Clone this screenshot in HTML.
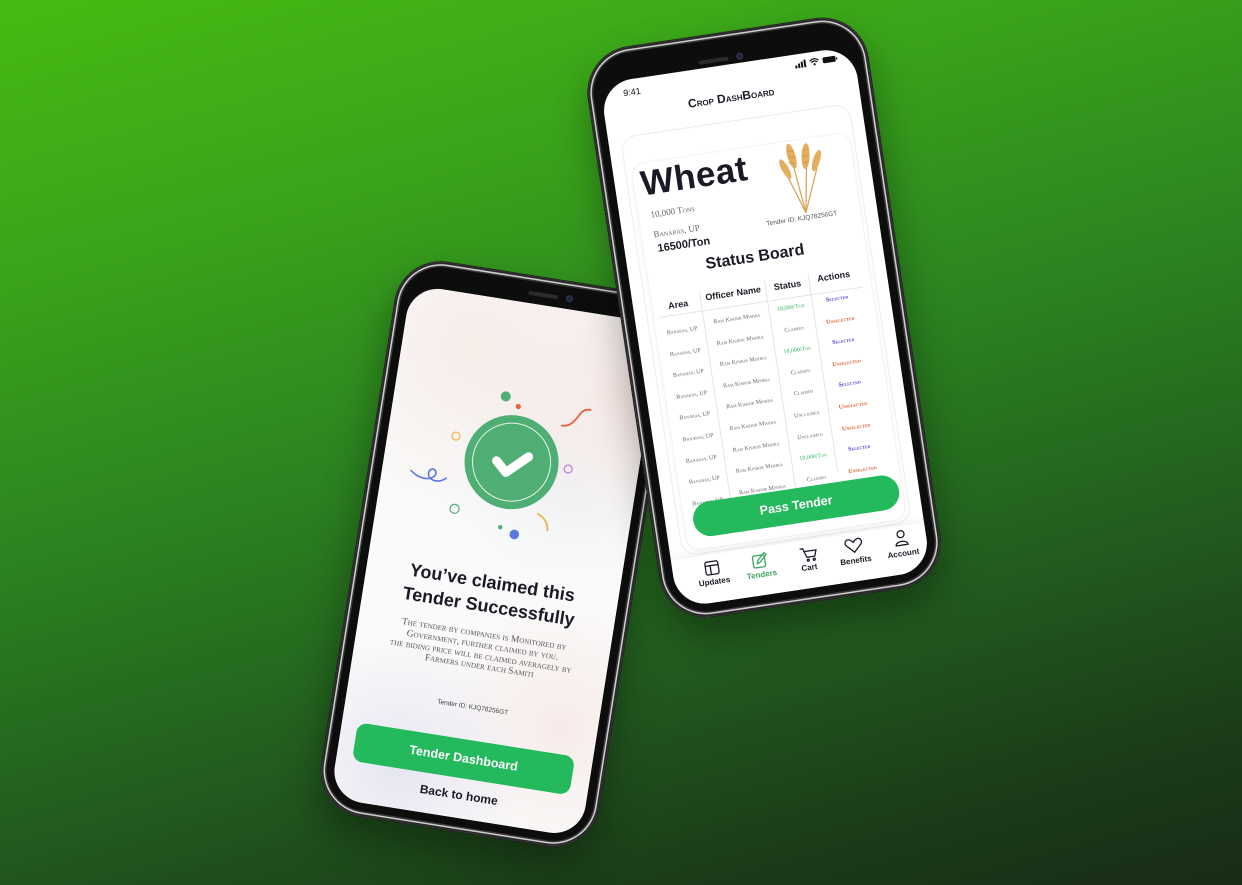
<!DOCTYPE html>
<html><head><meta charset="utf-8"><style>
*{margin:0;padding:0;box-sizing:border-box}
html,body{width:1242px;height:885px;overflow:hidden}
body{background:linear-gradient(165deg,#46ba12 0%,#3aa51a 22%,#2c8520 45%,#215a1e 70%,#1b3a19 88%,#182c16 100%);font-family:"Liberation Sans","DejaVu Sans",sans-serif;position:relative}
.phone{position:absolute;border-radius:46px;background:#0d0d0d;box-shadow:0 0 0 1px #222,inset 0 0 0 2px #2a2a2a,inset 0 0 0 3.5px #d0d0d0,inset 0 0 0 5px #3a3a3a,0 20px 40px rgba(0,0,0,.35)}
.screen{position:absolute;left:13px;right:13px;bottom:13px;border-radius:32px;background:#fff;overflow:hidden}
.spk{position:absolute;height:4px;width:30px;border-radius:2px;background:#2b2b2b}
.cam{position:absolute;width:7px;height:7px;border-radius:50%;background:#1c2236;box-shadow:inset 0 0 0 1.5px #2c3550}
.abs{position:absolute}
.c{text-align:center}
.sc{font-family:"Liberation Serif","DejaVu Serif",serif;font-variant:small-caps}
.b{font-weight:bold}
</style></head><body>

<!-- LEFT PHONE -->
<div class="phone" style="left:357px;top:274px;width:280px;height:560px;transform:rotate(9deg)">
 <div class="spk" style="left:130px;top:15px"></div><div class="cam" style="left:168px;top:13px"></div>
 <div class="screen" style="top:27px;background:radial-gradient(circle at 30% 10%,#f6ece8 0,rgba(255,255,255,0) 35%),radial-gradient(circle at 90% 15%,#f7e9e6 0,rgba(255,255,255,0) 30%),radial-gradient(circle at 70% 30%,#eef2f4 0,rgba(255,255,255,0) 30%),radial-gradient(circle at 25% 92%,#e6e6f2 0,rgba(255,255,255,0) 25%),radial-gradient(circle at 85% 80%,#f7ebe8 0,rgba(255,255,255,0) 28%),#fafafa">
  <svg class="abs" style="left:0;top:0" width="254" height="520" viewBox="0 0 254 520">
   <g transform="translate(127,160)">
    <circle r="47" fill="#4fae74"/>
    <circle r="39" fill="none" stroke="#e6f4ea" stroke-width="1"/>
    <path d="M-15 1 L-4 11 L16 -8" fill="none" stroke="#fff" stroke-width="9" stroke-linecap="round" stroke-linejoin="round"/>
    <circle cx="-16" cy="-64" r="5" fill="#4fae74"/>
    <circle cx="-2" cy="-56" r="2.6" fill="#e8613a"/>
    <path d="M44 -44 C52 -44 56 -50 60 -58 C63 -63 66 -64 70 -64" fill="none" stroke="#e8613a" stroke-width="1.8" stroke-linecap="round"/>
    <circle cx="-59" cy="-17" r="4" fill="none" stroke="#f0b24a" stroke-width="1.2"/>
    <circle cx="57" cy="-2" r="4" fill="none" stroke="#b57be0" stroke-width="1.2"/>
    <path d="M-98 24 C-90 30 -80 32 -74 26 C-70 20 -78 16 -80 22 C-82 30 -70 34 -62 26" fill="none" stroke="#5b78e0" stroke-width="1.6" stroke-linecap="round"/>
    <circle cx="-49" cy="55" r="4.5" fill="none" stroke="#4fae74" stroke-width="1.2"/>
    <circle cx="-1" cy="66" r="2.2" fill="#4fae74"/>
    <circle cx="14" cy="71" r="4.8" fill="#5b78e0"/>
    <path d="M34 47 C42 50 46 56 46 62" fill="none" stroke="#f0b24a" stroke-width="1.8" stroke-linecap="round"/>
   </g>
  </svg>
  <div class="abs c b" style="left:0;width:254px;top:270px;font-size:18px;line-height:24px;color:#1a1a26">You’ve claimed this<br>Tender Successfully</div>
  <div class="abs c sc" style="left:6px;width:242px;top:330px;font-size:9.5px;line-height:10.8px;color:#555">The tender by companies is Monitored by<br>Government, further claimed by you.<br>the biding price will be claimed averagely by<br>Farmers under each Samiti</div>
  <div class="abs c" style="left:0;width:254px;top:405px;font-size:6.5px;color:#444">Tender ID: KJQ78256GT</div>
  <div class="abs c b" style="left:16px;width:220px;top:441px;height:39px;line-height:39px;border-radius:10px;background:#24b95d;color:#fff;font-size:12.5px">Tender Dashboard</div>
  <div class="abs c b" style="left:0;width:254px;top:490px;font-size:12px;color:#1a1a26">Back to home</div>
 </div>
</div>

<!-- RIGHT PHONE -->
<div class="phone" style="left:623px;top:30px;width:282px;height:575px;transform:rotate(-8.5deg)">
 <div class="spk" style="left:114px;top:24px"></div><div class="cam" style="left:152px;top:22px"></div>
 <div class="screen" style="top:32px">
  <div class="abs" style="left:22px;top:8px;font-size:9px;color:#111">9:41</div>
  <svg class="abs" style="left:196px;top:5px" width="44" height="10" viewBox="0 0 44 10">
   <rect x="0" y="6" width="2" height="3" fill="#111"/><rect x="3" y="4.5" width="2" height="4.5" fill="#111"/><rect x="6" y="3" width="2" height="6" fill="#111"/><rect x="9" y="1.5" width="2" height="7.5" fill="#111"/>
   <path d="M15 4 Q19.5 0 24 4 M16.5 5.5 Q19.5 3 22.5 5.5" stroke="#111" stroke-width="1.2" fill="none"/><circle cx="19.5" cy="7.5" r="1.1" fill="#111"/>
   <rect x="28" y="2" width="13" height="6" rx="1.5" fill="#111"/><rect x="41.5" y="4" width="1.3" height="2" fill="#111"/>
  </svg>
  <div class="abs c b sc" style="left:0;width:256px;top:26px;font-size:12px;color:#1a1a26;font-family:'Liberation Sans',sans-serif">Crop DashBoard</div>
  <div class="abs" style="left:12px;top:56px;width:232px;height:424px;border:1px solid #ececec;border-radius:16px"></div>
  <div class="abs" style="left:18px;top:84px;width:222px;height:392px;border:1px solid #f2f2f2;border-radius:14px;box-shadow:0 1px 4px rgba(0,0,0,.04)"></div>
  <div class="abs b" style="left:26px;top:86px;font-size:35px;color:#1a1a26;letter-spacing:.5px">Wheat</div>
  <svg class="abs" style="left:163px;top:86px" width="48" height="74" viewBox="0 0 48 74">
   <g stroke="#d9a050" stroke-width="1.2" fill="none"><path d="M22 72 L16 20"/><path d="M22 72 L30 22"/><path d="M22 72 L40 28"/><path d="M22 72 L8 30"/></g>
   <g fill="#e4ae5e">
    <ellipse cx="16" cy="14" rx="4" ry="13" transform="rotate(-8 16 14)"/>
    <ellipse cx="30" cy="16" rx="4" ry="13" transform="rotate(10 30 16)"/>
    <ellipse cx="40" cy="22" rx="3.5" ry="11" transform="rotate(25 40 22)"/>
    <ellipse cx="8" cy="26" rx="3.5" ry="11" transform="rotate(-20 8 26)"/>
   </g>
   <g stroke="#c98a3a" stroke-width=".6"><path d="M13 8 L19 10 M12 14 L19 16 M12 20 L18 22 M27 10 L33 10 M27 16 L33 16 M27 22 L32 22"/></g>
  </svg>
  <div class="abs sc" style="left:31px;top:132px;font-size:9px;color:#666">10,000 Tons</div>
  <div class="abs sc" style="left:31px;top:152px;font-size:9px;color:#666">Banaras, UP</div>
  <div class="abs b" style="left:33px;top:166px;font-size:11px;color:#1a1a26">16500/Ton</div>
  <div class="abs c" style="left:140px;width:80px;top:160px;font-size:6.5px;color:#555">Tender ID: KJQ78256GT</div>
  <div class="abs c b" style="left:0;width:256px;top:186px;font-size:16px;color:#1a1a26">Status Board</div>
  <svg class="abs" style="left:0;top:219px" width="256" height="230">
   <g stroke="#e4e4e4" stroke-width="1"><line x1="68" y1="2" x2="68" y2="220"/><line x1="134" y1="0" x2="134" y2="220"/><line x1="178" y1="0" x2="178" y2="200"/><line x1="24" y1="21" x2="230" y2="21"/></g>
  </svg>
  <div class="abs c b" style="left:22px;width:46px;top:225px;font-size:9px;color:#1a1a26">Area</div>
  <div class="abs c b" style="left:68px;width:66px;top:222px;font-size:9px;color:#1a1a26">Officer Name</div>
  <div class="abs c b" style="left:134px;width:44px;top:222px;font-size:9px;color:#1a1a26">Status</div>
  <div class="abs c b" style="left:178px;width:50px;top:220px;font-size:9px;color:#1a1a26">Actions</div>
  <div class="abs c sc" style="left:22px;width:46px;top:247px;font-size:6px;line-height:21.6px;color:#666">Banaras, UP<br>Banaras, UP<br>Banaras, UP<br>Banaras, UP<br>Banaras, UP<br>Banaras, UP<br>Banaras, UP<br>Banaras, UP<br>Banaras, UP</div>
  <div class="abs c sc" style="left:68px;width:66px;top:243px;font-size:6px;line-height:21.6px;color:#666">Ram Kishor Mishra<br>Ram Kishor Mishra<br>Ram Kishor Mishra<br>Ram Kishor Mishra<br>Ram Kishor Mishra<br>Ram Kishor Mishra<br>Ram Kishor Mishra<br>Ram Kishor Mishra<br>Ram Kishor Mishra</div>
  <div class="abs c sc" style="left:134px;width:44px;top:240px;font-size:6px;line-height:21.6px;color:#666"><span style="color:#2db35a">18,000/Ton</span><br>Claimed<br><span style="color:#2db35a">18,000/Ton</span><br>Claimed<br>Claimed<br>Unclaimed<br>Unclaimed<br><span style="color:#2db35a">18,000/Ton</span><br>Claimed</div>
  <div class="abs c sc b" style="left:178px;width:50px;top:238px;font-size:6px;line-height:21.6px"><span style="color:#4b3fd6">Selected</span><br><span style="color:#d9572a">Unselected</span><br><span style="color:#4b3fd6">Selected</span><br><span style="color:#d9572a">Unselected</span><br><span style="color:#4b3fd6">Selected</span><br><span style="color:#d9572a">Unselected</span><br><span style="color:#d9572a">Unselected</span><br><span style="color:#4b3fd6">Selected</span><br><span style="color:#d9572a">Unselected</span></div>
  <div class="abs c b" style="left:28px;width:208px;top:429px;height:35px;line-height:35px;border-radius:18px;background:#24b95d;color:#fff;font-size:12.5px">Pass Tender</div>
  <div class="abs" style="left:0;top:482px;width:256px;height:60px;background:#fff;box-shadow:0 -3px 8px rgba(0,0,0,.06)"></div>
  <svg class="abs" style="left:0;top:484px" width="256" height="24" viewBox="0 0 256 24">
   <g fill="none" stroke="#1a1a26" stroke-width="1.3">
    <rect x="33" y="5" width="13" height="13" rx="2"/><path d="M33 9 H46 M38 9 V18"/>
    <path d="M129 6 H132 L135 15 H143 L145 9 H133"/><circle cx="136" cy="18" r="1"/><circle cx="142" cy="18" r="1"/>
    <path d="M183 17 L176 10 C173 7 176 3 179 4 C181 4.5 182 6 183 7 C184 6 185 4.5 187 4 C190 3 193 7 190 10 Z"/>
    <circle cx="231" cy="6" r="3.5"/><path d="M225 17 C225 12 237 12 237 17 Z"/>
   </g>
   <g fill="none" stroke="#3aa75e" stroke-width="1.3"><rect x="81" y="6" width="12" height="12" rx="2"/><path d="M85 14 L86 11 L93 4 L95 6 L88 13 Z"/></g>
  </svg>
  <div class="abs c b" style="left:18px;width:44px;top:505px;font-size:8px;color:#1a1a26">Updates</div>
  <div class="abs c b" style="left:66px;width:44px;top:505px;font-size:8px;color:#3aa75e">Tenders</div>
  <div class="abs c b" style="left:114px;width:44px;top:505px;font-size:8px;color:#1a1a26">Cart</div>
  <div class="abs c b" style="left:161px;width:44px;top:505px;font-size:8px;color:#1a1a26">Benefits</div>
  <div class="abs c b" style="left:209px;width:44px;top:505px;font-size:8px;color:#1a1a26">Account</div>
 </div>
</div>
</body></html>
